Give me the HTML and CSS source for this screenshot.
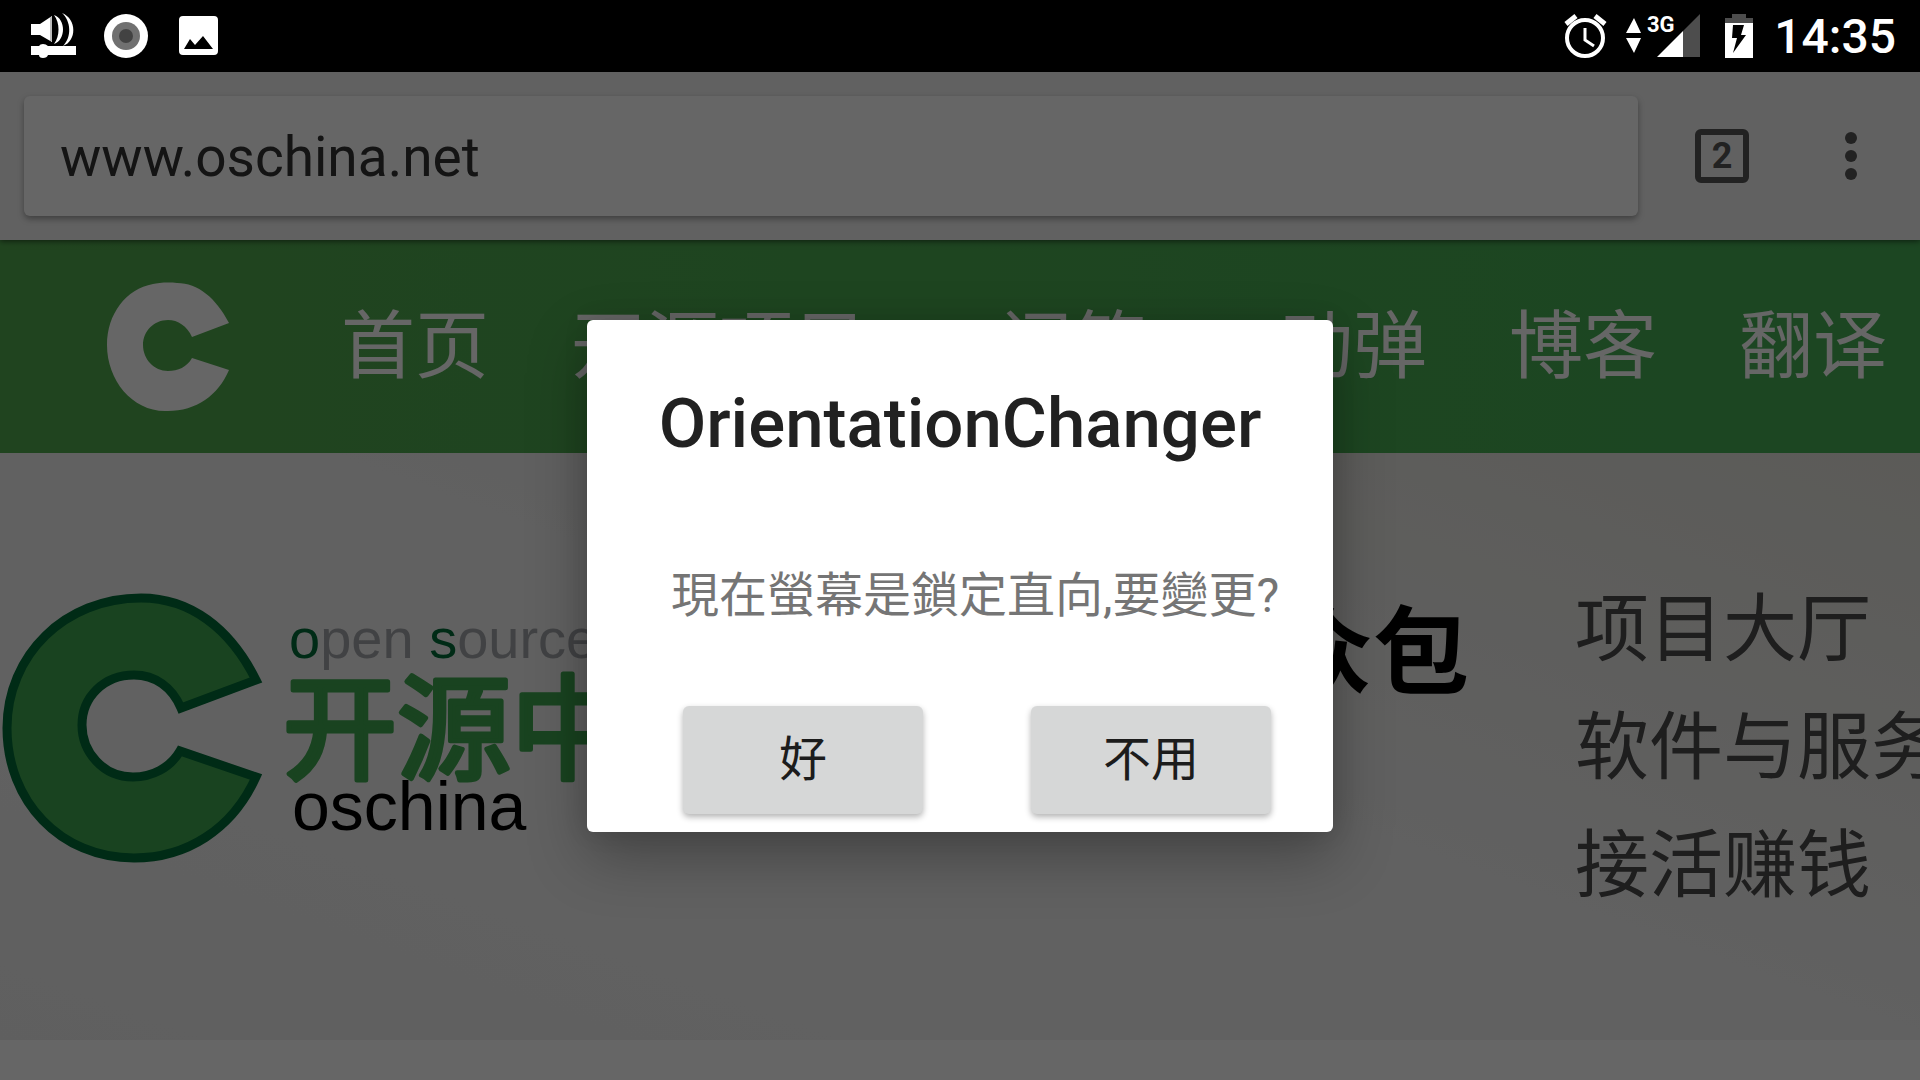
FILE: index.html
```html
<!DOCTYPE html>
<html lang="zh-CN">
<head>
<meta charset="utf-8">
<meta name="viewport" content="width=device-width, initial-scale=1">
<title>OrientationChanger</title>
<link rel="stylesheet" href="styles.css">
</head>
<body>
<header class="status">
  <div class="status-icons">
    <svg width="48" height="48" viewBox="0 0 48 48" aria-hidden="true">
      <path fill="#fff" d="M1 12h9L22 4v26L10 23H1zM1 34h8q1-2 4-2t5 2h28v9H18q-1 3-5 3t-4-3H1z"/>
      <path fill="#bbb" d="M20 5h2v24h-2z"/>
      <path fill="#fff" d="M24 3c12 4 12 25 0 29c6-8 6-21 0-29zM32 1c15 6 15 28 1 33c9-9 8-25-1-33z"/>
    </svg>
    <svg width="48" height="48" viewBox="0 0 48 48" aria-hidden="true">
      <circle cx="24" cy="24" r="22" fill="#fff"/><circle cx="24" cy="24" r="14" fill="#707070"/><circle cx="24" cy="24" r="7" fill="#424242"/>
    </svg>
    <svg width="48" height="48" viewBox="0 0 48 48" aria-hidden="true">
      <path fill="#fff" fill-rule="evenodd" d="M9 4h31q4 0 4 4v31q0 4-4 4H9q-4 0-4-4V8q0-4 4-4zM10 37h29L29 24l-8 9-5-6z"/>
    </svg>
  </div>
  <div class="status-system">
    <svg width="48" height="48" viewBox="0 0 48 48" aria-hidden="true">
      <circle cx="23" cy="26" r="18" fill="none" stroke="#fff" stroke-width="4"/>
      <path fill="none" stroke="#fff" stroke-width="3" d="M23 16v12l9 6"/>
      <path fill="none" stroke="#fff" stroke-width="5" d="M4 12l10-8M33 4l10 8"/>
    </svg>
    <svg width="80" height="48" viewBox="0 0 80 48" aria-hidden="true">
      <path fill="#fff" d="M4 21l8-15 7 15zM4 26h15l-7 15z"/>
      <path fill="#4d4d4d" d="M78 2v43H61V19z"/>
      <path fill="#fff" d="M61 19v26H35z"/>
      <text class="network" x="25" y="20">3G</text>
    </svg>
    <svg width="48" height="48" viewBox="0 0 48 48" aria-hidden="true">
      <path fill="#4d4d4d" d="M18 2h14v4h7v5H11V6h7z"/>
      <path fill="#fff" fill-rule="evenodd" d="M11 11h28v35H11zM19 13l-1 13h5l-4 15 13-18h-5l3-10z"/>
    </svg>
    <time>14:35</time>
  </div>
</header>
<div class="screen">
  <div class="toolbar">
    <input class="address" type="text" value="www.oschina.net" aria-label="网址">
    <button class="tabs" type="button" aria-label="标签页">2</button>
    <button class="more" type="button" aria-label="更多">
      <svg width="12" height="48" viewBox="0 0 12 48"><circle cx="6" cy="6" r="6"/><circle cx="6" cy="24" r="6"/><circle cx="6" cy="42" r="6"/></svg>
    </button>
  </div>
  <nav class="site-nav">
    <a class="home" href="#" aria-label="oschina">
      <svg width="124" height="130" viewBox="106 282 124 130"><path d="M229 323C216 298 198 283 177 283C167 282 158 283 153 284C126 289 107 314 107 345C107 380 132 411 165 411C195 412 218 396 229 370L192 358C187 367 178 371 168 371C154 371 143 359 143 345C143 331 154 320 168 320C178 320 187 326 192 337z"/></svg>
    </a>
    <a href="#">首页</a>
    <a href="#">开源项目</a>
    <a class="wide" href="#">问答</a>
    <a href="#">动弹</a>
    <a href="#">博客</a>
    <a href="#">翻译</a>
  </nav>
  <main class="hero">
    <svg class="logo" width="760" height="332" viewBox="0 581 760 332" role="img" aria-label="开源中国">
      <path fill="#3fa950" stroke="#006b38" stroke-width="9" d="M256 680C230 628 190 598 141 598C65 598 7 655 7 728C7 801 60 858 134 858C186 858 232 830 256 777L180 751C170 768 152 777 133 777C103 777 82 752 82 725C82 697 104 675 134 675C155 675 172 687 181 708z"/>
      <text class="tagline" x="289" y="658"><tspan class="initial">o</tspan>pen <tspan class="initial">s</tspan>ource</text>
      <text class="name" x="283" y="770">开源中国</text>
      <text class="domain" x="292" y="830">oschina</text>
    </svg>
    <h2>众包</h2>
    <ul>
      <li><a href="#">项目大厅</a></li>
      <li><a href="#">软件与服务</a></li>
      <li><a href="#">接活赚钱</a></li>
    </ul>
  </main>
  <div class="scrim">
    <section class="dialog" role="dialog" aria-modal="true" aria-labelledby="dialog-title" lang="zh-TW">
      <h1 id="dialog-title">OrientationChanger</h1>
      <p>現在螢幕是鎖定直向,要變更?</p>
      <div class="actions">
        <button type="button">好</button>
        <button type="button">不用</button>
      </div>
    </section>
  </div>
</div>
</body>
</html>
```
FILE: styles.css
```css
* { box-sizing: border-box; }

body {
  margin: 0;
  min-height: 100vh;
  display: flex;
  flex-direction: column;
  background: #fff;
  font-family: Roboto, "Noto Sans CJK SC", sans-serif;
  overflow-x: hidden;
}

a { color: inherit; text-decoration: none; }
svg { display: block; flex: none; }
button { border: 0; padding: 0; font-family: inherit; }

.status {
  height: 72px;
  padding: 0 24px 0 30px;
  display: flex;
  align-items: center;
  justify-content: space-between;
  background: #000;
  color: #fff;
}
.status-icons { display: flex; gap: 24px; }
.status-system { display: flex; align-items: center; gap: 12px; }
.status time {
  padding-top: 2px;
  font-size: 48px;
  line-height: 70px;
  font-weight: 500;
}
.network { font-size: 22px; font-weight: 700; fill: #fff; }

.screen {
  position: relative;
  flex: 1;
  overflow: hidden;
}

.toolbar {
  position: relative;
  display: flex;
  align-items: center;
  padding: 24px 63px 24px 24px;
  background: #f2f2f2;
  box-shadow: 0 1px 6px rgba(0, 0, 0, .6);
}
.address {
  flex: 1;
  min-width: 0;
  height: 120px;
  padding: 2px 36px 0;
  border: 0;
  border-radius: 6px;
  background: #fff;
  box-shadow: 0 3px 6px rgba(0, 0, 0, .35);
  color: #333;
  font: 400 55px/118px Roboto, sans-serif;
}
.tabs {
  width: 54px;
  height: 54px;
  margin: 0 96px 0 57px;
  border: 6px solid #555;
  border-radius: 6px;
  background: none;
  color: #555;
  font-size: 36px;
  line-height: 42px;
  font-weight: 700;
}
.more { background: none; fill: #555; }

.site-nav {
  height: 213px;
  padding-left: 106px;
  display: flex;
  align-items: center;
  gap: 82px;
  background: linear-gradient(90deg, #52aa4e, #46af56);
  color: #fff;
  fill: #fff;
  font-size: 74px;
  line-height: 112px;
  white-space: nowrap;
}
.home { margin-right: 29px; }
.site-nav .wide { padding: 0 50px; }

.hero {
  height: 587px;
  display: grid;
  grid-template-columns: minmax(0, 1fr) auto 345px;
  align-items: center;
  background: linear-gradient(200deg, #e4e3dc, #f2f2f2 45%, #f3f3f3 70%, #eee);
}
.hero h2 {
  align-self: start;
  margin: 140px 106px 0 0;
  font-size: 96px;
  line-height: 120px;
  font-weight: 700;
  color: #000;
}
.hero ul {
  margin: 0;
  padding: 2px 0 0;
  list-style: none;
  font-size: 74px;
  line-height: 118px;
  white-space: nowrap;
  color: #4b4b4b;
}
.tagline { font: 56px "Liberation Sans", sans-serif; fill: #a4a6aa; }
.initial { fill: #006b38; }
.name {
  font-size: 114px;
  font-weight: 400;
  fill: #3fa950;
  stroke: #3fa950;
  stroke-width: 5px;
  stroke-linejoin: round;
}
.domain { font: 68px "Liberation Sans", sans-serif; fill: #000; }

.scrim {
  position: absolute;
  inset: 0;
  display: flex;
  align-items: center;
  justify-content: center;
  background: rgba(0, 0, 0, .6);
}
.dialog {
  width: 746px;
  max-width: 100%;
  padding: 64px 0 18px;
  border-radius: 6px;
  background: #fff;
  box-shadow: 0 24px 60px rgba(0, 0, 0, .3), 0 0 24px rgba(0, 0, 0, .1);
  font-family: Roboto, "Noto Sans CJK TC", sans-serif;
}
.dialog h1 {
  margin: 0;
  text-align: center;
  font-size: 69px;
  line-height: 80px;
  font-weight: 500;
  color: #212121;
}
.dialog p {
  margin: 96px 48px 0 84px;
  font-size: 48px;
  line-height: 72px;
  color: #757575;
  white-space: nowrap;
}
.actions {
  margin: 74px 50px 0 84px;
  display: flex;
  justify-content: center;
  gap: 108px;
}
.actions button {
  width: 240px;
  height: 108px;
  border-radius: 6px;
  background: #d6d7d7;
  box-shadow: 0 3px 6px rgba(0, 0, 0, .3);
  color: #1c1c1c;
  font-size: 48px;
  line-height: 72px;
}
```
